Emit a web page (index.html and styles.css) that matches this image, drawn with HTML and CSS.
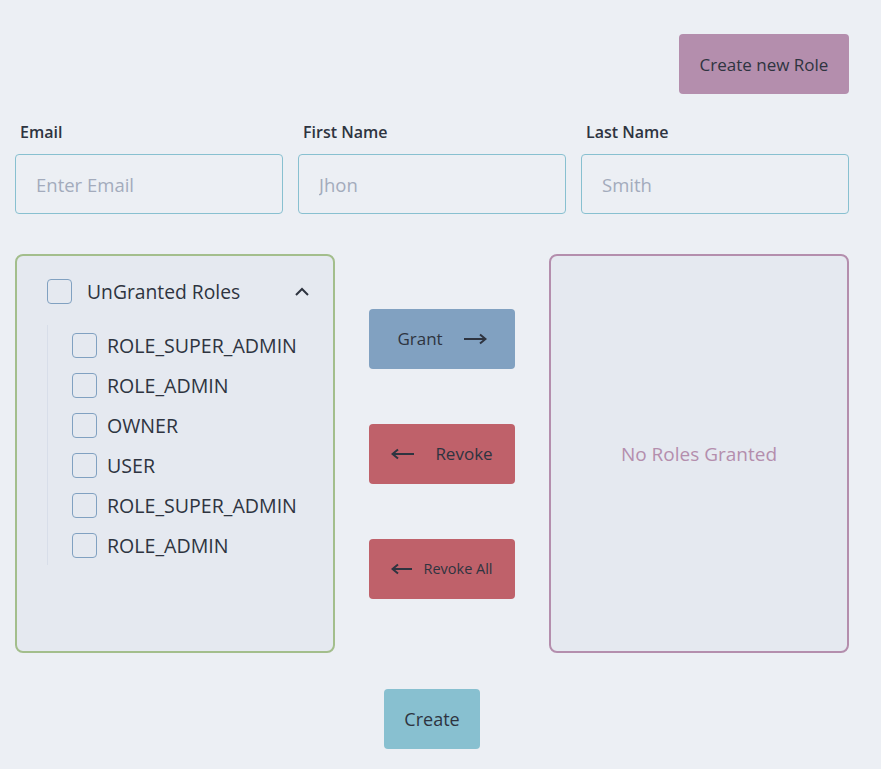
FILE: index.html
```html
<!DOCTYPE html>
<html lang="en">
<head>
<meta charset="utf-8">
<title>Roles</title>
<link rel="stylesheet" href="styles.css">
</head>
<body>
<div class="page">
  <div class="top-bar">
    <button class="btn btn-role">Create new Role</button>
  </div>

  <div class="fields">
    <label class="field">
      <span class="field-label">Email</span>
      <input class="field-input" type="text" placeholder="Enter Email">
    </label>
    <label class="field">
      <span class="field-label">First Name</span>
      <input class="field-input" type="text" placeholder="Jhon">
    </label>
    <label class="field">
      <span class="field-label">Last Name</span>
      <input class="field-input" type="text" placeholder="Smith">
    </label>
  </div>

  <div class="roles">
    <div class="panel panel-ungranted">
      <div class="panel-head">
        <span class="check"></span>
        <span class="panel-title">UnGranted Roles</span>
        <svg class="chevron" width="14" height="9" viewBox="0 0 14 9"><path d="M1 8 L7 2 L13 8" fill="none" stroke="#2e3440" stroke-width="2"/></svg>
      </div>
      <ul class="role-list">
        <li class="role-item"><span class="check"></span><span>ROLE_SUPER_ADMIN</span></li>
        <li class="role-item"><span class="check"></span><span>ROLE_ADMIN</span></li>
        <li class="role-item"><span class="check"></span><span>OWNER</span></li>
        <li class="role-item"><span class="check"></span><span>USER</span></li>
        <li class="role-item"><span class="check"></span><span>ROLE_SUPER_ADMIN</span></li>
        <li class="role-item"><span class="check"></span><span>ROLE_ADMIN</span></li>
      </ul>
    </div>

    <div class="actions">
      <button class="btn btn-grant">Grant
        <svg class="arrow" width="24" height="12" viewBox="0 0 24 12"><path d="M1 6 H22 M17 1.5 L22.5 6 L17 10.5" fill="none" stroke="#2e3440" stroke-width="2"/></svg>
      </button>
      <button class="btn btn-revoke">
        <svg class="arrow" width="24" height="12" viewBox="0 0 24 12"><path d="M23 6 H2 M7 1.5 L1.5 6 L7 10.5" fill="none" stroke="#2e3440" stroke-width="2"/></svg>
        Revoke</button>
      <button class="btn btn-revoke btn-small">
        <svg class="arrow" width="22" height="12" viewBox="0 0 22 12"><path d="M21 6 H2 M7 1.5 L1.5 6 L7 10.5" fill="none" stroke="#2e3440" stroke-width="2"/></svg>
        Revoke All</button>
    </div>

    <div class="panel panel-granted">
      <span class="empty">No Roles Granted</span>
    </div>
  </div>

  <div class="footer">
    <button class="btn btn-create">Create</button>
  </div>
</div>
</body>
</html>
```

FILE: styles.css
```css
* { box-sizing: border-box; }

html, body {
  margin: 0;
  background: #eceff4;
}

body {
  font-family: "Open Sans", "Noto Sans", sans-serif;
  color: #2e3440;
}

.page {
  width: 834px;
  margin-left: 15px;
  padding-top: 34px;
}

.top-bar {
  display: flex;
  justify-content: flex-end;
}

.btn {
  border: none;
  border-radius: 4px;
  height: 60px;
  font-family: inherit;
  color: #2e3440;
  font-size: 17px;
  display: inline-flex;
  align-items: center;
  justify-content: center;
  gap: 20px;
  padding: 0;
}

.btn-role {
  width: 170px;
  background: #b48ead;
}

.fields {
  display: grid;
  grid-template-columns: repeat(3, minmax(0, 1fr));
  gap: 15px;
  margin-top: 27px;
}

.field {
  display: flex;
  flex-direction: column;
  min-width: 0;
}

.field-label {
  font-size: 16px;
  font-weight: 600;
  line-height: 22px;
  padding-left: 5px;
  margin-bottom: 11px;
}

.field-input {
  width: 100%;
  height: 60px;
  border: 1px solid #88c0d0;
  border-radius: 4px;
  background: transparent;
  padding: 0 20px;
  font-family: inherit;
  font-size: 18.5px;
  color: #2e3440;
}

.field-input::placeholder {
  color: #a3abbc;
}

.roles {
  display: grid;
  grid-template-columns: 320px 1fr 300px;
  margin-top: 40px;
}

.panel {
  height: 399px;
  border-radius: 8px;
  background: #e5e9f0;
}

.panel-ungranted {
  border: 2px solid #a3be8c;
  padding: 15px 24px 0 30px;
}

.panel-head {
  display: flex;
  align-items: center;
  height: 40px;
}

.panel-title {
  flex: 1;
  font-size: 19.3px;
  font-weight: 500;
  margin-left: 15px;
}

.check {
  width: 25px;
  height: 25px;
  flex: none;
  border: 1px solid #81a1c1;
  border-radius: 4px;
}

.role-list {
  list-style: none;
  margin: 14px 0 0;
  padding: 0 0 0 24px;
  border-left: 1px solid #d8dee9;
}

.role-item {
  display: flex;
  align-items: center;
  gap: 10px;
  height: 40px;
  font-size: 19.6px;
  font-weight: 500;
}

.actions {
  display: flex;
  flex-direction: column;
  align-items: center;
  justify-content: center;
  gap: 55px;
}

.actions .btn {
  width: 146px;
}

.btn-grant {
  background: #81a1c1;
}

.btn-revoke {
  background: #bf616a;
}

.btn-small {
  font-size: 14.5px;
  gap: 10px;
}

.panel-granted {
  border: 2px solid #b48ead;
  display: flex;
  align-items: center;
  justify-content: center;
}

.empty {
  color: #b48ead;
  font-size: 19px;
}

.footer {
  display: flex;
  justify-content: center;
  margin-top: 36px;
}

.btn-create {
  width: 96px;
  background: #88c0d0;
  font-size: 18px;
  font-weight: 500;
}
```
